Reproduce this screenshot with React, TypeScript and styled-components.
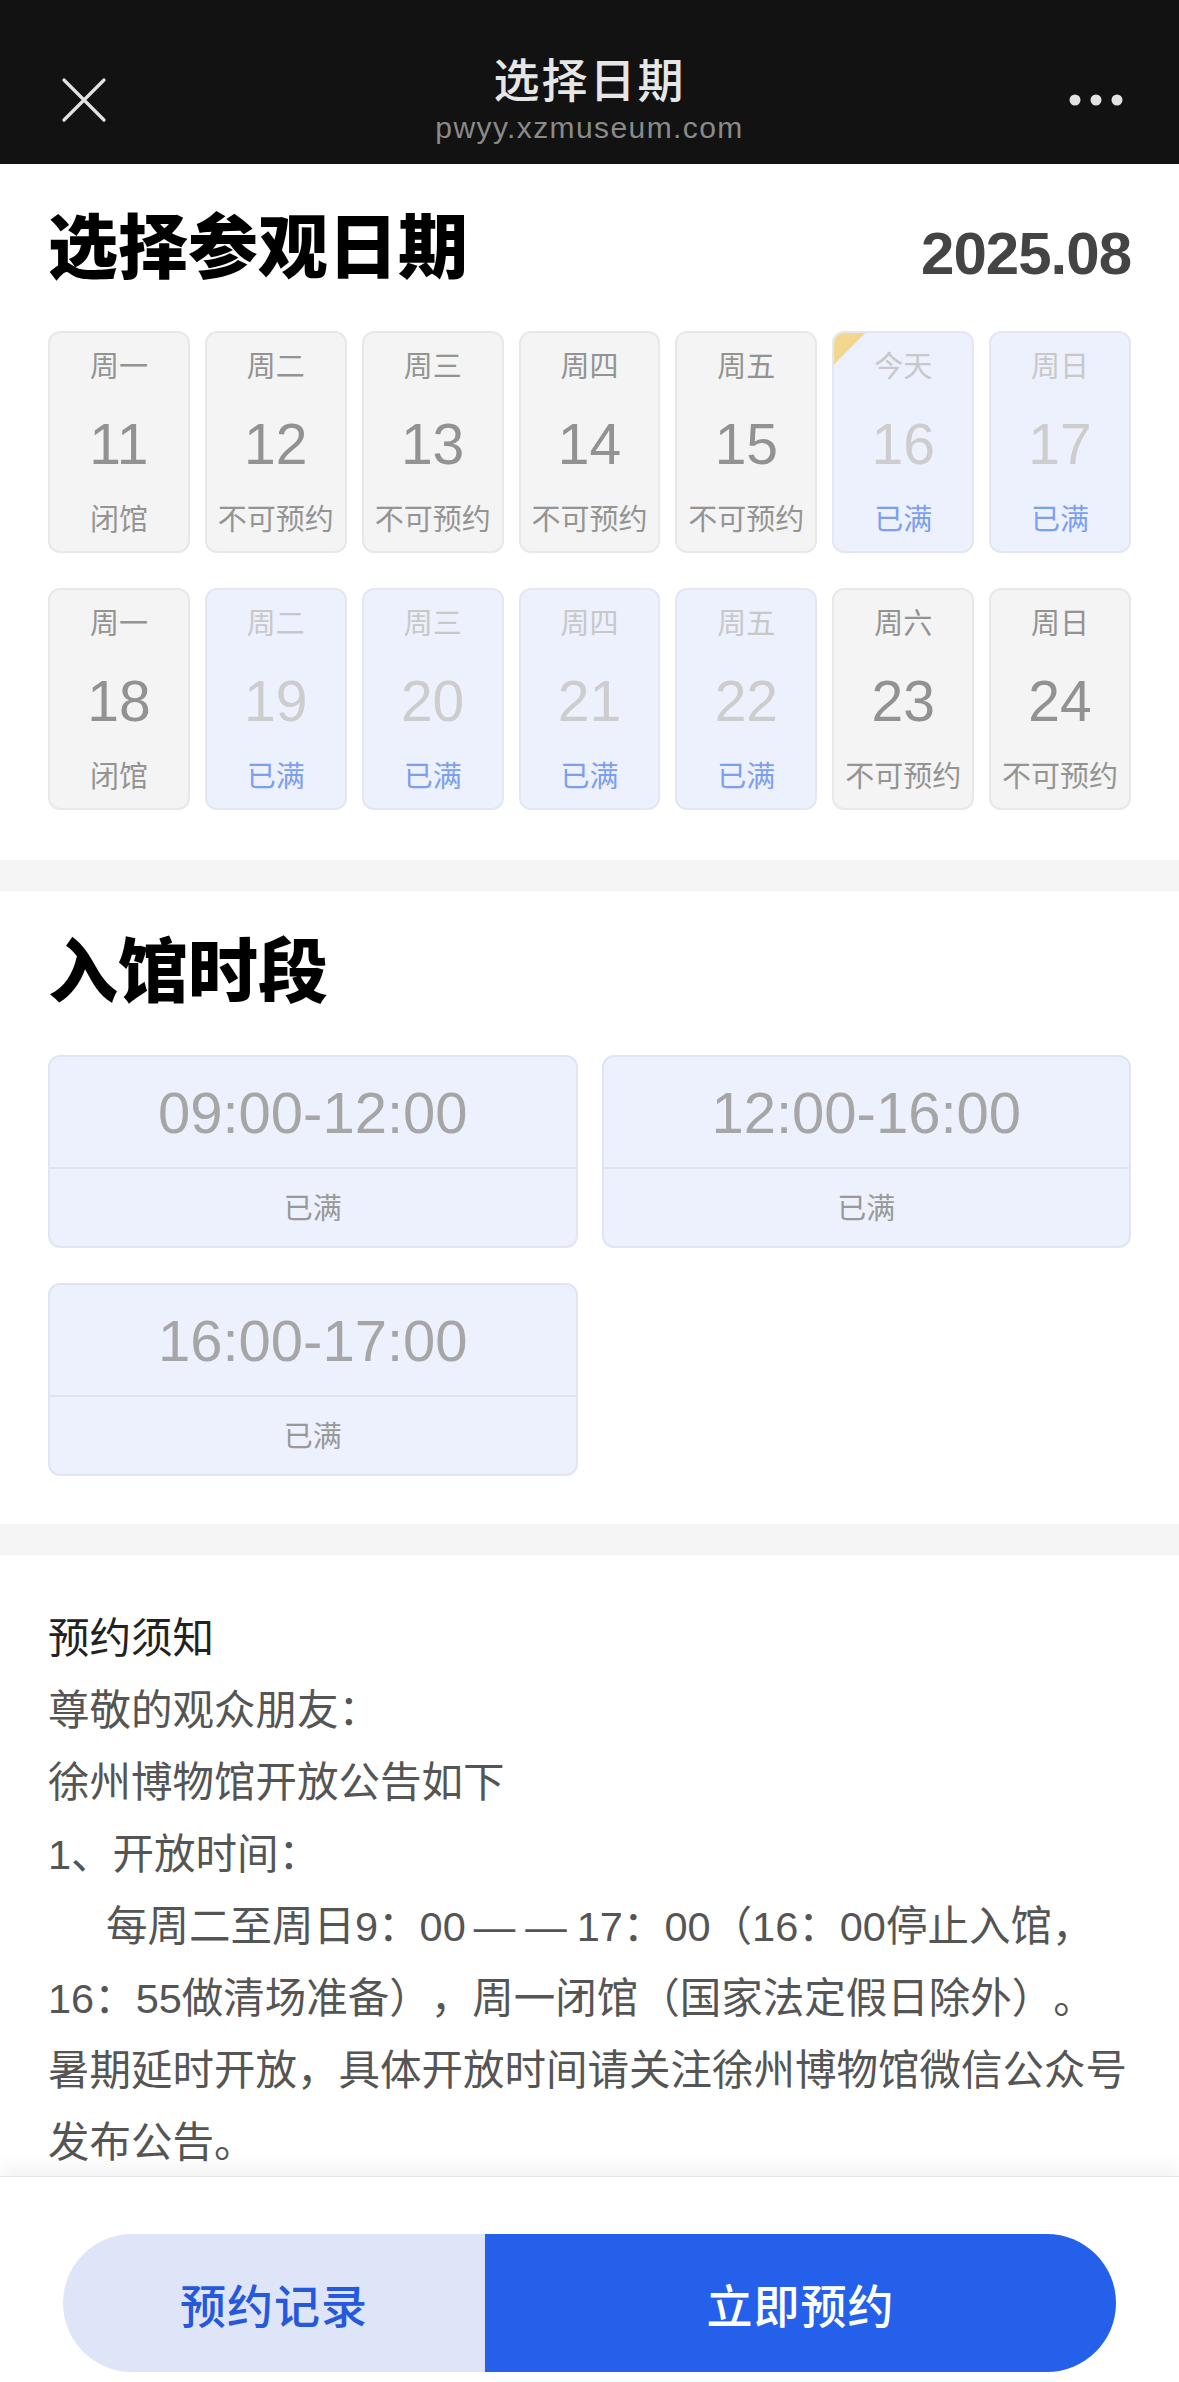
import React from 'react';
import styled, { createGlobalStyle } from 'styled-components';

const GlobalStyle = createGlobalStyle`
  html, body {
    margin: 0;
    padding: 0;
    background: #fff;
  }

  body {
    font-family: "Liberation Sans", "Noto Sans CJK SC", sans-serif;
    color: #333;
    text-spacing-trim: space-all;
  }
`;

interface DayItem {
  week: string;
  day: number;
  status: string;
  full?: boolean;
  today?: boolean;
}

// two weeks shown in the picker
const weeks: DayItem[][] = [
  [
    { week: '周一', day: 11, status: '闭馆' },
    { week: '周二', day: 12, status: '不可预约' },
    { week: '周三', day: 13, status: '不可预约' },
    { week: '周四', day: 14, status: '不可预约' },
    { week: '周五', day: 15, status: '不可预约' },
    { week: '今天', day: 16, status: '已满', full: true, today: true },
    { week: '周日', day: 17, status: '已满', full: true }
  ],
  [
    { week: '周一', day: 18, status: '闭馆' },
    { week: '周二', day: 19, status: '已满', full: true },
    { week: '周三', day: 20, status: '已满', full: true },
    { week: '周四', day: 21, status: '已满', full: true },
    { week: '周五', day: 22, status: '已满', full: true },
    { week: '周六', day: 23, status: '不可预约' },
    { week: '周日', day: 24, status: '不可预约' }
  ]
];

const slots = ['09:00-12:00', '12:00-16:00', '16:00-17:00'];

function App (): React.ReactElement {
  return (
    <Page>
      <GlobalStyle />
      <TopBar>
        <CloseButton>
          <svg width='46' height='46' viewBox='0 0 46 46'>
            <path d='M3 3 L43 43 M43 3 L3 43' stroke='#e2e2e2' strokeWidth='3.2' strokeLinecap='round' />
          </svg>
        </CloseButton>
        <TitleBlock>
          <BarTitle>选择日期</BarTitle>
          <BarUrl>pwyy.xzmuseum.com</BarUrl>
        </TitleBlock>
        <MoreButton>
          <svg width='56' height='14' viewBox='0 0 56 14'>
            <circle cx='7' cy='7' r='5.5' fill='#e2e2e2' />
            <circle cx='28' cy='7' r='5.5' fill='#e2e2e2' />
            <circle cx='49' cy='7' r='5.5' fill='#e2e2e2' />
          </svg>
        </MoreButton>
      </TopBar>

      <Scroll>
        <Section $top={45}>
          <SectionHead>
            <SectionTitle>选择参观日期</SectionTitle>
            <MonthLabel>2025.08</MonthLabel>
          </SectionHead>
          <DateGrid>
            {weeks.flat().map((item) => (
              <DateCard key={item.day} $full={item.full} $today={item.today}>
                <WeekLabel $full={item.full}>{item.week}</WeekLabel>
                <DayNumber $full={item.full}>{item.day}</DayNumber>
                <DayStatus $full={item.full}>{item.status}</DayStatus>
              </DateCard>
            ))}
          </DateGrid>
        </Section>

        <Band />

        <Section $top={42}>
          <SectionHead>
            <SectionTitle>入馆时段</SectionTitle>
          </SectionHead>
          <SlotGrid>
            {slots.map((slot) => (
              <SlotCard key={slot}>
                <SlotTime>{slot}</SlotTime>
                <SlotStatus>已满</SlotStatus>
              </SlotCard>
            ))}
          </SlotGrid>
        </Section>

        <Band />

        <Notice>
          <NoticeHead>预约须知</NoticeHead>
          <NoticeLine>尊敬的观众朋友：</NoticeLine>
          <NoticeLine>徐州博物馆开放公告如下</NoticeLine>
          <NoticeLine>1、开放时间：</NoticeLine>
          <NoticeLine $indent>
            每周二至周日9：00<Dash>——</Dash>17：00（16：00停止入馆，
          </NoticeLine>
          <NoticeLine>16：55做清场准备），周一闭馆（国家法定假日除外）。</NoticeLine>
          <NoticeLine>暑期延时开放，具体开放时间请关注徐州博物馆微信公众号</NoticeLine>
          <NoticeLine>发布公告。</NoticeLine>
        </Notice>
      </Scroll>

      <Footer>
        <ActionPill>
          <RecordButton>预约记录</RecordButton>
          <BookButton>立即预约</BookButton>
        </ActionPill>
      </Footer>
    </Page>
  );
}

const Page = styled.div`
  height: 100vh;
  display: flex;
  flex-direction: column;
  overflow: hidden;
`;

const TopBar = styled.header`
  flex: none;
  height: 164px;
  box-sizing: border-box;
  padding-top: 36px;
  background: #121212;
  display: grid;
  grid-template-columns: 200px 1fr 200px;
  grid-template-rows: 128px;
  align-items: center;
`;

const CloseButton = styled.div`
  padding-left: 61px;
  display: flex;
  align-items: center;
`;

const MoreButton = styled.div`
  padding-right: 55px;
  display: flex;
  justify-content: flex-end;
  align-items: center;
`;

const TitleBlock = styled.div`
  display: flex;
  flex-direction: column;
  align-items: center;
  gap: 3px;
`;

const BarTitle = styled.div`
  font-size: 46px;
  line-height: 52px;
  font-weight: 500;
  color: #e6e6e6;
  letter-spacing: 2px;
`;

const BarUrl = styled.div`
  font-size: 30px;
  line-height: 36px;
  color: #8a8a8a;
  letter-spacing: 1.4px;
`;

const Scroll = styled.main`
  flex: 1;
  overflow: hidden;
`;

const Section = styled.section<{ $top: number }>`
  padding: ${(p) => p.$top}px 48px 48px;
`;

const SectionHead = styled.div`
  height: 80px;
  display: flex;
  align-items: center;
  justify-content: space-between;
  margin-bottom: 42px;
`;

const SectionTitle = styled.h2`
  margin: 0;
  font-size: 70px;
  line-height: 80px;
  font-weight: 900;
  color: #000;
`;

const MonthLabel = styled.div`
  font-size: 60px;
  font-weight: 700;
  letter-spacing: -1px;
  color: #444;
  padding-top: 8px;
`;

const DateGrid = styled.div`
  display: grid;
  grid-template-columns: repeat(7, 1fr);
  column-gap: 15px;
  row-gap: 35px;
  padding-bottom: 2px;
`;

const DateCard = styled.div<{ $full?: boolean; $today?: boolean }>`
  position: relative;
  height: 222px;
  box-sizing: border-box;
  padding: 14px 0 11px;
  border-radius: 12px;
  border: 2px solid ${(p) => (p.$full ? '#e3e7f0' : '#e8e8e8')};
  background: ${(p) => (p.$full ? '#ecf1fd' : '#f4f4f4')};
  display: flex;
  flex-direction: column;
  align-items: center;
  justify-content: space-between;
  overflow: hidden;

  &::before {
    content: '';
    display: ${(p) => (p.$today ? 'block' : 'none')};
    position: absolute;
    left: 0;
    top: 0;
    width: 32px;
    height: 32px;
    background: linear-gradient(135deg, #f4d78f 50%, transparent 50%);
  }
`;

const WeekLabel = styled.div<{ $full?: boolean }>`
  font-size: 29px;
  line-height: 40px;
  color: ${(p) => (p.$full ? '#c8c8c8' : '#939393')};
`;

const DayNumber = styled.div<{ $full?: boolean }>`
  font-size: 57px;
  line-height: 64px;
  color: ${(p) => (p.$full ? '#cdcdcd' : '#929292')};
`;

const DayStatus = styled.div<{ $full?: boolean }>`
  font-size: 29px;
  line-height: 40px;
  white-space: nowrap;
  color: ${(p) => (p.$full ? '#7c9ff0' : '#949494')};
`;

const Band = styled.div`
  height: 31px;
  background: #f5f5f5;
`;

const SlotGrid = styled.div`
  display: grid;
  grid-template-columns: 1fr 1fr;
  column-gap: 24px;
  row-gap: 35px;
`;

const SlotCard = styled.div`
  height: 193px;
  box-sizing: border-box;
  border: 2px solid #dfe5f5;
  border-radius: 12px;
  background: #ecf1fd;
  display: grid;
  grid-template-rows: 112px 1fr;
`;

const SlotTime = styled.div`
  display: flex;
  align-items: center;
  justify-content: center;
  font-size: 58px;
  color: #a6a6a6;
  border-bottom: 2px solid #e0e3ea;
`;

const SlotStatus = styled.div`
  display: flex;
  align-items: center;
  justify-content: center;
  font-size: 29px;
  color: #999;
  padding-bottom: 4px;
`;

const Notice = styled.section`
  padding: 48px 48px 0;
  font-size: 41.5px;
  line-height: 72px;
`;

const NoticeHead = styled.div`
  color: #222;
`;

const NoticeLine = styled.div<{ $indent?: boolean }>`
  color: #555;
  white-space: nowrap;
  padding-left: ${(p) => (p.$indent ? '58px' : '0')};
`;

const Dash = styled.span`
  letter-spacing: 10px;
  padding-left: 8px;
`;

const Footer = styled.footer`
  flex: none;
  position: relative;
  height: 206px;
  box-sizing: border-box;
  padding: 57px 63px 11px;
  background: #fff;
  border-top: 1px solid #e6e6e6;
  box-shadow: 0 -10px 18px rgba(0, 0, 0, 0.05);
`;

const ActionPill = styled.div`
  height: 138px;
  border-radius: 69px;
  overflow: hidden;
  display: grid;
  grid-template-columns: 422px 1fr;
`;

const RecordButton = styled.div`
  display: flex;
  align-items: center;
  justify-content: center;
  background: #dee5f9;
  color: #2658dc;
  font-size: 46px;
  font-weight: 500;
  letter-spacing: 1px;
`;

const BookButton = styled.div`
  display: flex;
  align-items: center;
  justify-content: center;
  background: #2560ea;
  color: #fff;
  font-size: 46px;
  font-weight: 500;
  letter-spacing: 1px;
`;

export default App;
